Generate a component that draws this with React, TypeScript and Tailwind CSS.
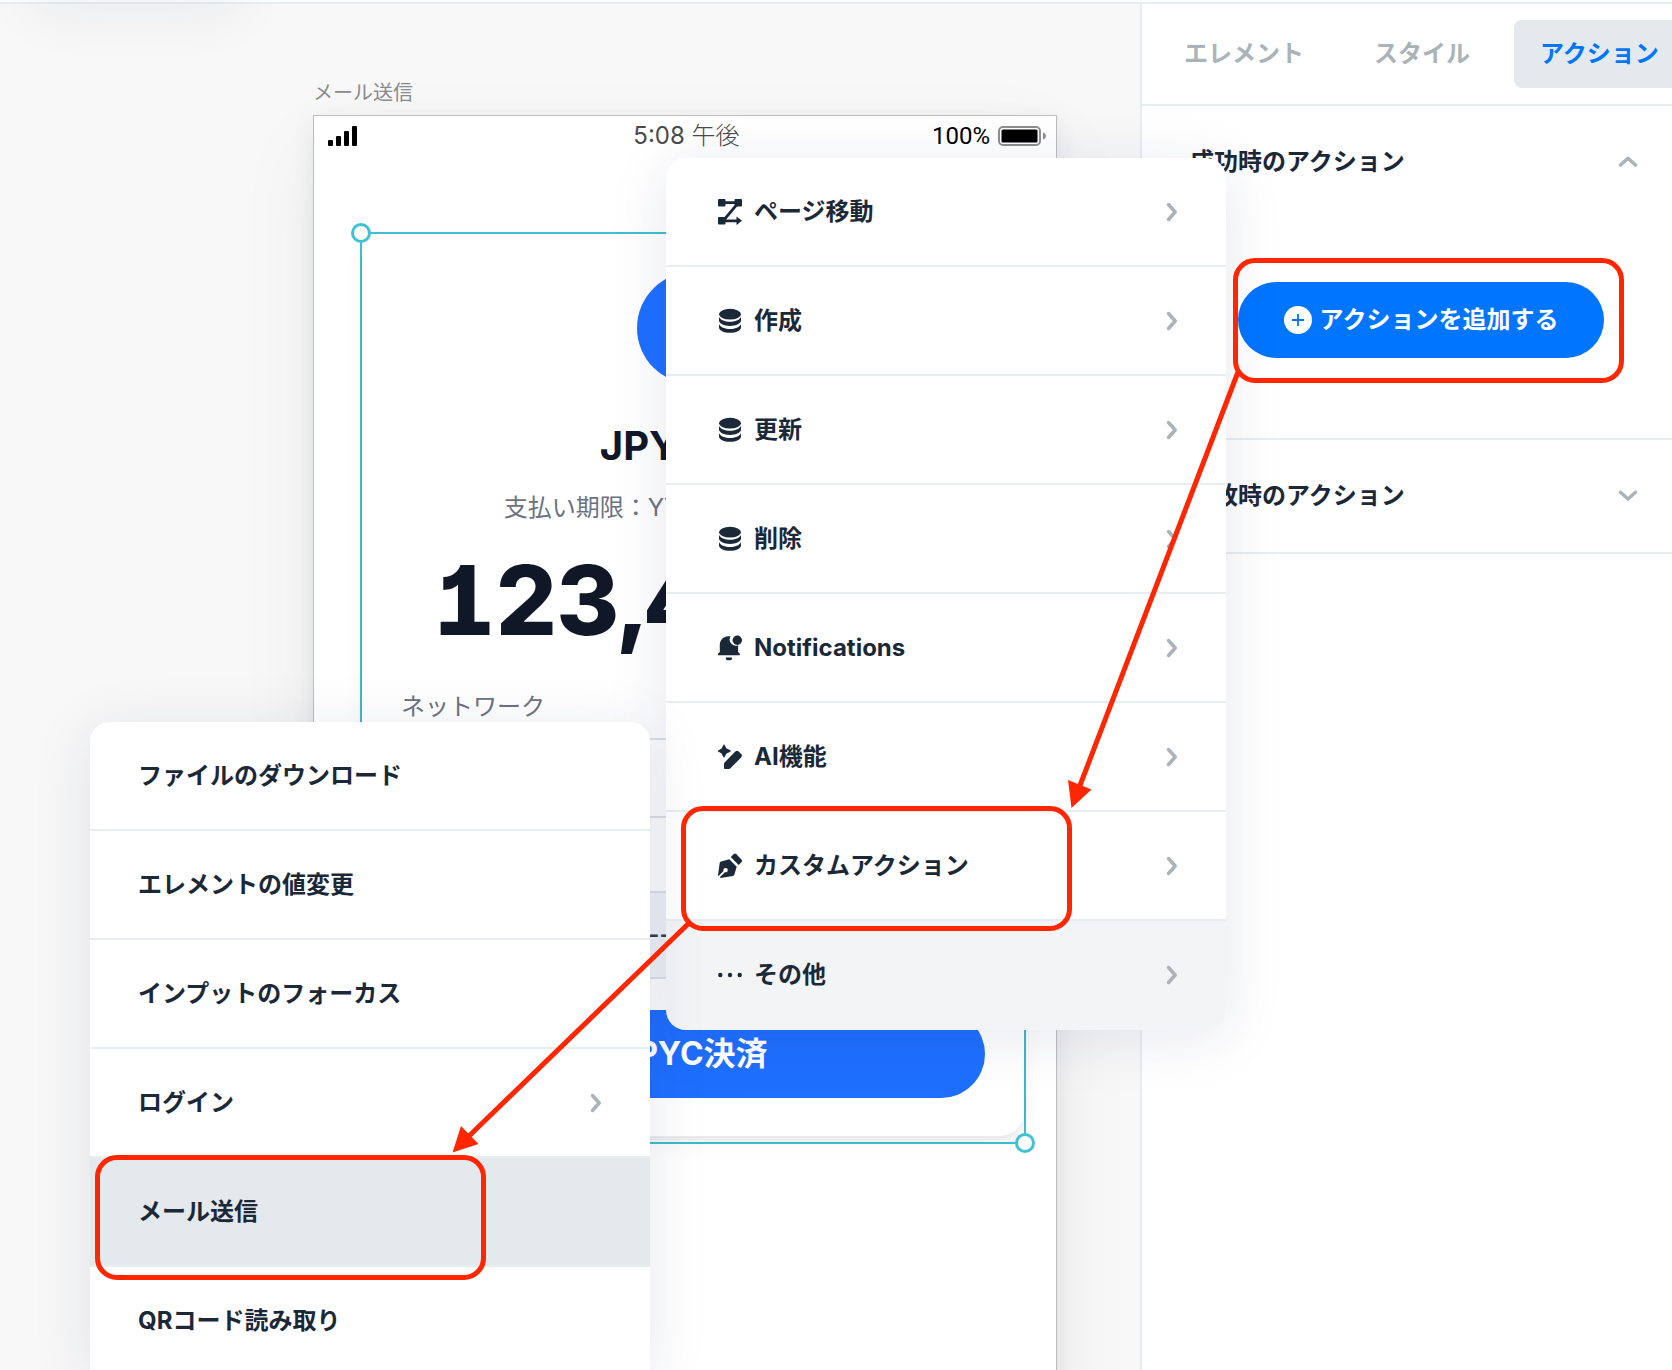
import React, { useState } from "react";

// メニュー項目の型定義
interface MenuItem {
  label: string;
  icon?: React.ReactNode;
  hasChildren?: boolean;
}

// ---- アイコン ----
const FlowIcon = () => (
  <svg viewBox="0 0 24 26" className="h-[26px] w-6" fill="currentColor" aria-hidden="true">
    <rect x="0" y="0" width="7.5" height="7.5" rx="1" />
    <rect x="16.5" y="0" width="7.5" height="7.5" rx="1" />
    <rect x="0" y="18" width="7.5" height="7.5" rx="1" />
    <path d="M6 2.300h12v2.800H6zM17.300 5.200l2.400 1.600L7.700 21l-2.400-1.600zM6 20.400h12.500v-3l5.500 4.300-5.500 4.300v-2.800H6z" />
  </svg>
);

const DatabaseIcon = () => (
  <svg viewBox="0 0 24 26" className="h-[26px] w-6" fill="currentColor" aria-hidden="true">
    <ellipse cx="12" cy="6.2" rx="11" ry="5.4" />
    <path d="M1 9c1.600 3.200 6 4.700 11 4.700S21.400 12.200 23 9v3.600c0 3-4.900 5.300-11 5.300S1 15.600 1 12.600z" />
    <path d="M1 16.200c1.600 3.200 6 4.700 11 4.700s9.400-1.500 11-4.700v3.300c0 3-4.900 5.300-11 5.300S1 22.500 1 19.500z" />
  </svg>
);

const BellIcon = () => (
  <svg viewBox="0 0 24 26" className="h-[26px] w-6" fill="currentColor" aria-hidden="true">
    <path d="M12.600 1.200a6.200 6.200 0 0 0 6.600 9.300c.3 0 .6-.1.9-.2V17l1.700 1.700v1.500H0v-1.500L1.800 17V9.600C1.800 5 5.700 1.200 10.300 1.200z" />
    <circle cx="19.300" cy="5.200" r="4.700" />
    <path d="M7.800 22.600h6.200v.8a1.800 1.800 0 0 1-1.800 1.800H9.600a1.800 1.800 0 0 1-1.800-1.800z" />
  </svg>
);

const MagicPenIcon = () => (
  <svg viewBox="0 0 24 26" className="h-[26px] w-6" fill="currentColor" aria-hidden="true">
    <path d="M6 1.200 7.900 5 12 7 7.900 9 6 12.800 4.100 9 .4 7 4.100 5z" stroke="currentColor" strokeWidth="1.400" strokeLinejoin="round" />
    <path d="M17.300 7.600a2.400 2.400 0 0 1 3.400 0l2.400 2.500a2.400 2.400 0 0 1 0 3.400L12.400 24.300a2 2 0 0 1-1.400.6H7a1 1 0 0 1-1-1v-4.100a2 2 0 0 1 .6-1.400z" />
  </svg>
);

const NibIcon = () => (
  <svg viewBox="0 0 24 26" className="h-[26px] w-6" fill="currentColor" aria-hidden="true">
    <path d="M15.600 1.300a2 2 0 0 1 2.800 0l5 5.100a2 2 0 0 1 0 2.800L20.600 12 12.800 4.100z" />
    <path d="M11.300 6.300l7.400 7.500-2.300 7.700a2 2 0 0 1-1.600 1.400L2.700 25.100l-.9-.9 5-5a2.200 2.200 0 1 0-1.300-1.300L.6 22.900 0 22.300 1.700 10.100a2 2 0 0 1 1.500-1.600z" />
  </svg>
);

const DotsIcon = () => (
  <svg viewBox="0 0 24 26" className="h-[26px] w-6" fill="currentColor" aria-hidden="true">
    <circle cx="2.300" cy="13" r="2.200" />
    <circle cx="12" cy="13" r="2.200" />
    <circle cx="21.700" cy="13" r="2.200" />
  </svg>
);

const ChevronRight = () => (
  <svg viewBox="0 0 12 20" className="h-5 w-3 shrink-0 text-[#aab4b8]" fill="none" stroke="currentColor" strokeWidth="3.500" strokeLinecap="round" strokeLinejoin="round" aria-hidden="true">
    <path d="M2.500 2.500 9.200 10l-6.700 7.500" />
  </svg>
);

const ChevronToggle = ({ open }: { open: boolean }) => (
  <svg viewBox="0 0 20 12" className="h-3 w-5 shrink-0 text-[#aab4b8]" fill="none" stroke="currentColor" strokeWidth="3.500" strokeLinecap="round" strokeLinejoin="round" aria-hidden="true">
    <path d={open ? "M2.500 9 10 2.300l7.500 6.700" : "M2.500 2.300 10 9l7.500-6.700"} />
  </svg>
);

const actionMenu: MenuItem[] = [
  { label: "ページ移動", icon: <FlowIcon />, hasChildren: true },
  { label: "作成", icon: <DatabaseIcon />, hasChildren: true },
  { label: "更新", icon: <DatabaseIcon />, hasChildren: true },
  { label: "削除", icon: <DatabaseIcon />, hasChildren: true },
  { label: "Notifications", icon: <BellIcon />, hasChildren: true },
  { label: "AI機能", icon: <MagicPenIcon />, hasChildren: true },
  { label: "カスタムアクション", icon: <NibIcon />, hasChildren: true },
  { label: "その他", icon: <DotsIcon />, hasChildren: true },
];

const otherMenu: MenuItem[] = [
  { label: "ファイルのダウンロード" },
  { label: "エレメントの値変更" },
  { label: "インプットのフォーカス" },
  { label: "ログイン", hasChildren: true },
  { label: "メール送信" },
  { label: "QRコード読み取り" },
];

const tabs = ["エレメント", "スタイル", "アクション"];

// フローティングメニューの中身
function MenuList({ items, active, activeClass, onSelect }: {
  items: MenuItem[];
  active: string;
  activeClass: string;
  onSelect: (label: string) => void;
}) {
  return (
    <ul>
      {items.map((item) => (
        <li key={item.label} className="border-b-2 border-[#e8edf1] last:border-[#f3f4f6]">
          <button
            type="button"
            onClick={() => onSelect(item.label)}
            className={`flex h-[107px] w-full items-center pr-12 text-left text-2xl font-bold text-[#1b2838] ${
              item.icon ? "pl-[52px]" : "pl-12"
            } ${item.label === active ? activeClass : "bg-white"}`}
          >
            {item.icon && <span className="mr-3">{item.icon}</span>}
            <span className="flex-1">{item.label}</span>
            {item.hasChildren && <ChevronRight />}
          </button>
        </li>
      ))}
    </ul>
  );
}

// スマホのプレビュー
function PhonePreview() {
  return (
    <div className="absolute top-[71px] left-[313px] flex h-[1500px] w-[744px] flex-col">
      <p className="mb-1 h-9 text-xl leading-9 text-[#8b8b8b]">メール送信</p>
      <div className="flex-1 border border-[#bdbdbd] bg-white shadow-[0_30px_80px_rgba(0,0,0,0.06),0_6px_20px_rgba(40,50,90,0.09)]">
        <div className="grid h-10 grid-cols-3 items-center pr-2.5 pl-[13px] text-2xl">
          <svg viewBox="0 0 30 20" className="h-5 w-[30px]" fill="#000" aria-hidden="true">
            <rect x="1" y="14" width="5" height="6" rx="1" />
            <rect x="9" y="10" width="5" height="10" rx="1" />
            <rect x="17" y="5" width="5" height="15" rx="1" />
            <rect x="25" y="0" width="5" height="20" rx="1" />
          </svg>
          <span className="text-center font-light text-[#4a4a4a]">
            <span className="font-normal">5:08</span> 午後
          </span>
          <span className="flex items-center justify-end gap-2 font-[Roboto,sans-serif] text-black">
            100%
            <svg viewBox="0 0 48 20" className="h-5 w-12" aria-hidden="true">
              <rect x="1" y="1" width="41" height="18" rx="4" fill="none" stroke="#8f8f8f" strokeWidth="2" />
              <rect x="3.500" y="3.500" width="36" height="13" rx="1.500" fill="#000" />
              <path d="M45 6.500c2 .6 3 2 3 3.500s-1 2.900-3 3.500z" fill="#8f8f8f" />
            </svg>
          </span>
        </div>

        {/* 選択中のコンポーネント */}
        <div className="relative mt-[76px] ml-[46px] h-[912px] w-[666px] border-2 border-[#3fc1d4]">
          <span className="absolute -top-[11px] -left-[11px] size-5 rounded-full border-[3px] border-[#3fc1d4] bg-white" />
          <span className="absolute -right-[11px] -bottom-[11px] z-10 size-5 rounded-full border-[3px] border-[#3fc1d4] bg-white" />
          <div className="flex h-[902px] flex-col items-center rounded-3xl px-[39px] pt-[38px] shadow-[0_4px_6px_rgba(0,0,0,0.07),0_8px_24px_rgba(0,0,0,0.04)]">
            <div className="size-28 shrink-0 rounded-full bg-[#1f6fff]" />
            <h1 className="mt-9 text-[40px] leading-[52px] font-bold whitespace-nowrap text-[#101828]">JPYC決済</h1>
            <p className="mt-5 text-2xl leading-8 whitespace-nowrap text-[#6b7280]">支払い期限：YYYY/MM/DD 00:00</p>
            <p className="mt-5 text-[96px] leading-[112px] font-extrabold whitespace-nowrap text-[#101828] [font-feature-settings:'tnum','cv01']">123,456 円</p>
            <label htmlFor="network" className="mt-[35px] self-start text-2xl leading-8 text-[#6b7280]">ネットワーク</label>
            <select id="network" className="mt-[15px] h-20 w-full shrink-0 appearance-none rounded-2xl border-2 border-[#dfe2ea] bg-transparent px-6 text-2xl" />
            <div className="mt-[73px] h-[88px] w-full shrink-0 overflow-hidden rounded-2xl border-2 border-[#dfe2ea] bg-[#f1f5f9] px-6 text-center text-2xl leading-[84px] font-semibold whitespace-nowrap text-[#334155]">
              --------------------------------------
            </div>
            <button type="button" className="mt-[31px] h-[88px] w-full shrink-0 rounded-full bg-[#1f6fff] text-[32px] font-bold text-white">
              JPYC決済
            </button>
          </div>
        </div>
      </div>
    </div>
  );
}

// 右サイドバーの開閉セクション
function Section({ title, open, onToggle, children }: {
  title: string;
  open: boolean;
  onToggle: () => void;
  children: React.ReactNode;
}) {
  return (
    <section className="border-b-2 border-[#e8edf1]">
      <button
        type="button"
        onClick={onToggle}
        aria-expanded={open}
        className="flex h-28 w-full items-center justify-between pr-[34px] pl-12 text-2xl font-bold text-[#1b2838]"
      >
        {title}
        <ChevronToggle open={open} />
      </button>
      {open && children}
    </section>
  );
}

// 手順を示す赤い注釈
function Annotations() {
  return (
    <div className="pointer-events-none absolute inset-0">
      <div className="absolute top-[258px] left-[1233px] h-[125px] w-[391px] rounded-[22px] border-[5px] border-[#ff2600]" />
      <div className="absolute top-[806px] left-[681px] h-[125px] w-[391px] rounded-[22px] border-[5px] border-[#ff2600]" />
      <div className="absolute top-[1155px] left-[95px] h-[125px] w-[391px] rounded-[22px] border-[5px] border-[#ff2600]" />
      <svg width="1672" height="1370" className="absolute top-0 left-0" fill="#ff2600" stroke="#ff2600" aria-hidden="true">
        <path d="M1238 372 1079 788M688 924 468 1137" fill="none" strokeWidth="5" />
        <path d="M1071.500 808 1068 780l23.500 9.500zM452.500 1152.500 461 1126l17.500 18z" stroke="none" />
      </svg>
    </div>
  );
}

export default function App() {
  const [tab, setTab] = useState("アクション");
  const [successOpen, setSuccessOpen] = useState(true);
  const [failureOpen, setFailureOpen] = useState(false);
  const [action, setAction] = useState("その他");
  const [other, setOther] = useState("メール送信");

  return (
    <div className="relative flex h-screen flex-col overflow-hidden bg-white font-[Inter,'Noto_Sans_CJK_JP',sans-serif]">
      <header className="h-1 shrink-0 border-b-2 border-[#e6edf3]" />

      <div className="flex min-h-0 flex-1">
        <main className="relative min-w-0 flex-1 overflow-hidden bg-[#f8f8f8]">
          <PhonePreview />
        </main>

        <aside className="w-[532px] shrink-0 overflow-hidden border-l-2 border-[#e8edf1] bg-white">
          <nav className="flex h-[102px] items-center gap-[18px] border-b-2 border-[#e8edf1] pl-4">
            {tabs.map((name) => (
              <button
                key={name}
                type="button"
                onClick={() => setTab(name)}
                className={`h-[68px] shrink-0 rounded-lg px-[26px] text-2xl font-bold whitespace-nowrap ${
                  tab === name ? "bg-[#e4e9ed] text-[#0075ff]" : "text-[#aab4b8]"
                }`}
              >
                {name}
              </button>
            ))}
          </nav>

          <Section title="成功時のアクション" open={successOpen} onToggle={() => setSuccessOpen(!successOpen)}>
            <div className="px-24 pt-16 pb-20">
              <button
                type="button"
                className="flex h-[76px] w-[366px] items-center justify-center gap-2 rounded-full bg-[#0075ff] text-2xl font-bold whitespace-nowrap text-white"
              >
                <svg viewBox="0 0 28 28" className="size-7" aria-hidden="true">
                  <circle cx="14" cy="14" r="14" fill="#fff" />
                  <path d="M14 8v12M8 14h12" stroke="#0075ff" strokeWidth="1.800" />
                </svg>
                アクションを追加する
              </button>
            </div>
          </Section>

          <Section title="失敗時のアクション" open={failureOpen} onToggle={() => setFailureOpen(!failureOpen)}>
            <div className="h-16" />
          </Section>
        </aside>
      </div>

      {/* 画面上部の外にあるメニューの影 */}
      <div className="absolute -top-10 left-12 h-8 w-44 shadow-[0_4px_60px_12px_rgba(30,40,80,0.08)]" />

      <div className="absolute top-[158px] left-[666px] w-[560px] overflow-hidden rounded-[20px] shadow-[0_8px_60px_rgba(30,40,100,0.10)]">
        <MenuList items={actionMenu} active={action} activeClass="bg-[#f3f4f6]" onSelect={setAction} />
      </div>

      <div className="absolute top-[722px] left-[90px] w-[560px] overflow-hidden rounded-t-[20px] shadow-[0_8px_60px_rgba(30,40,100,0.10)]">
        <MenuList items={otherMenu} active={other} activeClass="bg-[#e4e9ed]" onSelect={setOther} />
      </div>

      <Annotations />
    </div>
  );
}
